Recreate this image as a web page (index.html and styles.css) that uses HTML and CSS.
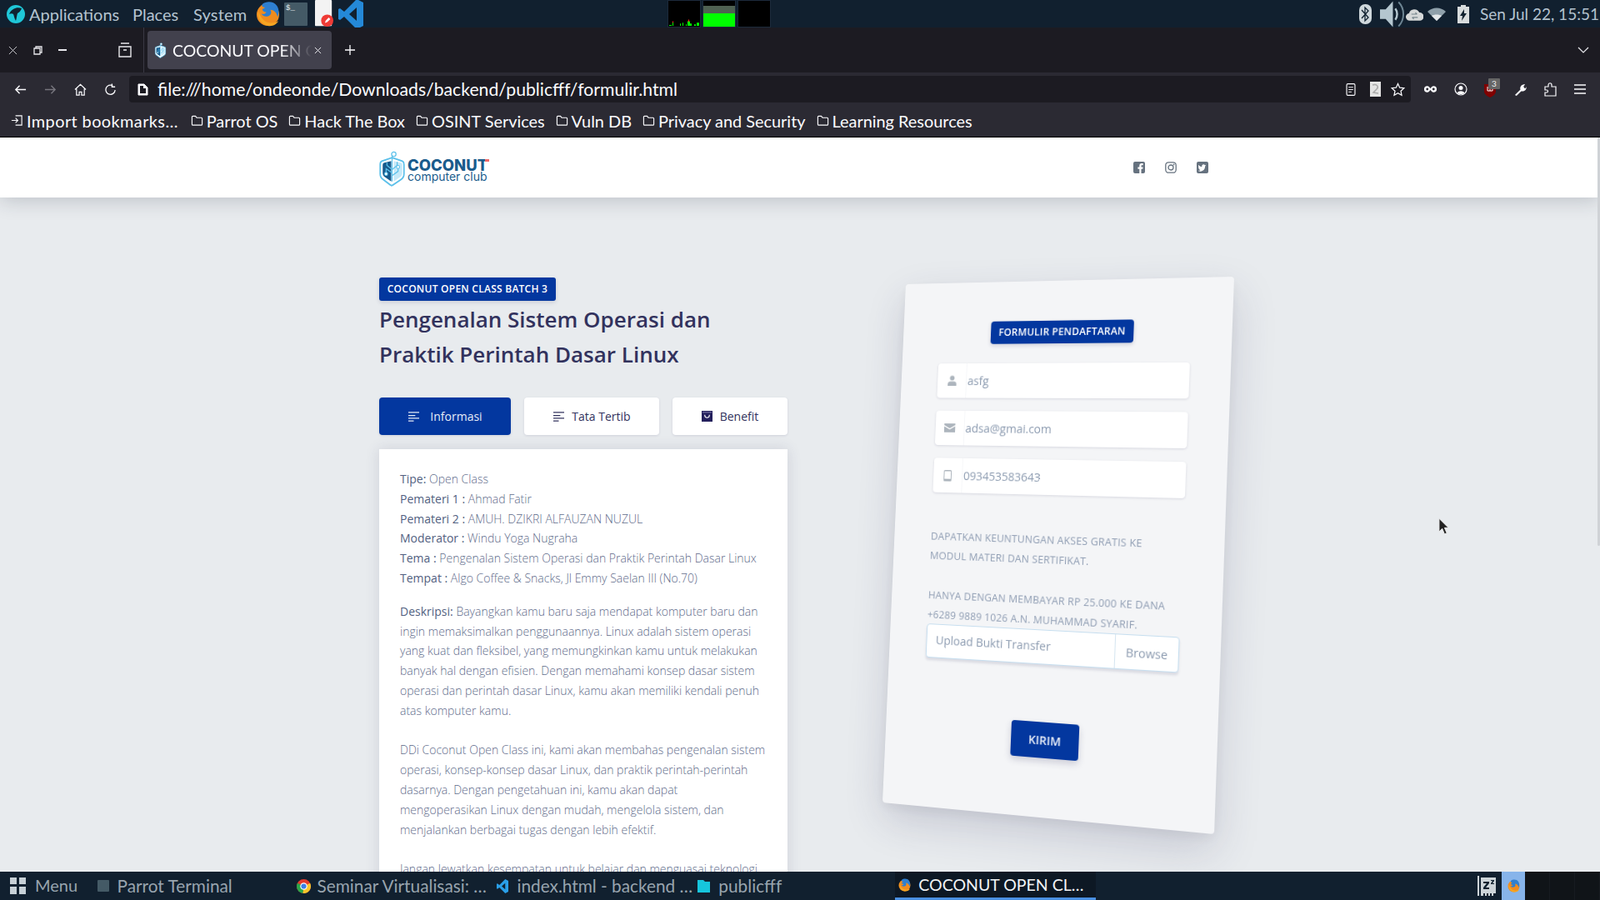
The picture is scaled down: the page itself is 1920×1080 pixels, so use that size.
FILE: index.html
```html
<!DOCTYPE html>
<html lang="id">
<head>
<meta charset="utf-8">
<title>COCONUT OPEN CLASS</title>
<link rel="stylesheet" href="styles.css">
</head>
<body>
<svg class="defs" width="0" height="0">
  <symbol id="ff" viewBox="0 0 30 34">
    <circle cx="15" cy="18" r="14" fill="#f08c1e"/>
    <path d="M8 5c5-4 14-4 18 2 3 4 3 10 1 14-1-6-5-9-9-9 2 3 1 7-3 8-4 1-7-1-8-3 3 1 5 0 6-2-3 0-5-2-5-4 2 0 3-1 3-2-3 0-4-2-3-4z" fill="#2e7fd0"/>
    <path d="M3 14c-1 8 3 16 12 18 6 1 11-2 13-6-5 3-12 3-17 0-4-3-6-7-8-12z" fill="#f6a623"/>
  </symbol>
  <symbol id="coco" viewBox="0 0 30 42">
    <path d="M15 8 27 12c2 1 2 2 2 4v11c0 3-1 5-4 7l-9 6c-1 1-2 1-3 0l-8-6c-3-2-4-4-4-7V16c0-2 0-3 2-4z" fill="#fff" stroke="#5bc0ea" stroke-width="1.8"/>
    <path d="M14 12v24l-7-5c-2-1-3-3-3-5V17c0-2 1-3 2-3z" fill="#175a8c"/>
    <path d="M17 12v24l7-5c2-1 3-3 3-5V17c0-2-1-3-2-3z" fill="#5bc0ea" opacity=".35"/>
    <path d="M15 36V6M15 22l-6-5v-3M15 26l-7-5v5M15 22l6-5v-4M15 29l7-5v-5" fill="none" stroke="#5bc0ea" stroke-width="1.2"/>
    <circle cx="17" cy="4" r="2.6" fill="#fff" stroke="#5bc0ea" stroke-width="1.2"/>
    <circle cx="8" cy="27" r="1.8" fill="#fff" stroke="#5bc0ea"/>
    <circle cx="22" cy="19" r="1.8" fill="#fff" stroke="#5bc0ea"/>
  </symbol>
  <symbol id="folder" viewBox="0 0 16 16">
    <path d="M1.5 13V3.5c0-.6.4-1 1-1h3.4l1.6 2h6c.6 0 1 .4 1 1V13c0 .6-.4 1-1 1h-11c-.6 0-1-.4-1-1z" fill="none" stroke="#fbfbfe" stroke-width="1.2"/>
  </symbol>
  <symbol id="lines" viewBox="0 0 16 14">
    <path d="M1 2h14M1 6h9M1 9.500h14M1 13h7" fill="none" stroke="currentColor" stroke-width="1.5"/>
  </symbol>
</svg>

<header class="panel">
  <svg class="i-parrot" viewBox="0 0 22 24"><circle cx="11" cy="12" r="11" fill="#1fc7d8"/><path d="M18 5c-3-1-7-1-10 1-2 1-4 3-5 6 2-1 4-1 5 0 1 2 1 5 3 8 1-3 1-6 2-9 2-1 4-3 5-6z" fill="#10212f"/></svg>
  <nav class="panel-menu"><span class="pm-a">Applications</span><span class="pm-b">Places</span><span class="pm-c">System</span></nav>
  <svg class="i-ff" viewBox="0 0 30 34"><use href="#ff"/></svg>
  <span class="i-term">$_</span>
  <svg class="i-note" viewBox="0 0 24 36"><rect width="22" height="34" y="0" rx="1" fill="#f3f3f3"/><circle cx="16" cy="27" r="8" fill="#ef3b36"/><path d="m13 30 1-3 4-4 2 2-4 4z" fill="#fff"/></svg>
  <svg class="i-vs" viewBox="0 0 30 36"><path d="M22 0 30 4v28l-8 4L7 21l-5 4-2-1V12l2-1 5 4zM22 10l-9 8 9 8z" fill="#2489d8"/></svg>
  <div class="monitors">
    <div class="mon"><svg viewBox="0 0 38 33" preserveAspectRatio="none"><path d="M1 31h3v1H1zM5 27h1v5H5zM14 29h1v3h-1zM17 28h1v4h-1zM21 30h1v2h-1zM23 26h3v6h-3zM26 29h2v3h-2zM31 30h2v2h-2zM34 28h3v4h-3z" fill="#0f0"/><path d="M24 24h1v3h-1zM5 26h1v2H5z" fill="#f22"/></svg></div>
    <div class="mon mon-mem"><span class="mem-a"></span><span class="mem-b"></span></div>
    <div class="mon"></div>
  </div>
  <div class="tray">
    <svg class="t-bt" viewBox="0 0 15 24"><rect width="15" height="24" rx="7" fill="#cfd8dc"/><path d="m3 7 8 9-4 4V4l4 4-8 9" fill="none" stroke="#10212f" stroke-width="1.3"/></svg>
    <svg class="t-vol" viewBox="0 0 30 34"><path d="M0 11h7l9-10v32l-9-10H0z" fill="#b4c6cf"/><path d="M19 10c3 4 3 10 0 14" fill="none" stroke="#b4c6cf" stroke-width="2.500"/><path d="M23 2c8 8 8 22 0 30" fill="none" stroke="#6d8593" stroke-width="2"/></svg>
    <svg class="t-cloud" viewBox="0 0 22 18"><path d="M5 17a4.500 4.500 0 0 1-1-9 7 7 0 0 1 13-1 5 5 0 0 1 1 10z" fill="#d5d8d8"/><path d="M7 9h7m-2-2 2 2M15 13H8m2 2-2-2" stroke="#76858c" stroke-width="1.2" fill="none"/></svg>
    <svg class="t-wifi" viewBox="0 0 22 16"><path d="M0 5c6-6 16-6 22 0L11 16z" fill="#8fa0aa"/><path d="M5 10c3-2 9-2 12 0l-6 6z" fill="#e4e8ea"/></svg>
    <svg class="t-bat" viewBox="0 0 14 22"><path d="M4 0h6v2h4v20H0V2h4z" fill="#d8dcdd"/><path d="M8 5 3 13h3l-1 6 6-9H8z" fill="#10212f"/></svg>
    <span class="clock">Sen Jul 22, 15:51</span>
  </div>
</header>

<section class="tabbar">
  <svg class="w-x" viewBox="0 0 12 12"><path d="m1 1 10 10M11 1 1 11" stroke="#d8d8dc" stroke-width="1"/></svg>
  <svg class="w-r" viewBox="0 0 11 11"><path d="M3 3V1h7v7H8M1 3h7v7H1z" fill="none" stroke="#e8e8ec" stroke-width="1.300"/></svg>
  <span class="w-m"></span>
  <svg class="w-a" viewBox="0 0 16 18"><path d="M3 1h10M1 5h14v12H1zM6 9h4" fill="none" stroke="#e8e8ec" stroke-width="1.400"/></svg>
  <span class="tab-sep"></span>
  <div class="tab">
    <svg class="tab-fav" viewBox="0 0 30 42"><use href="#coco"/></svg>
    <span class="tab-title">COCONUT OPEN CLASS</span>
    <svg class="tab-x" viewBox="0 0 10 10"><path d="m1 1 8 8M9 1 1 9" stroke="#e8e8ec" stroke-width="1.100"/></svg>
  </div>
  <svg class="tab-plus" viewBox="0 0 14 14"><path d="M7 1v12M1 7h12" stroke="#fbfbfe" stroke-width="1.300"/></svg>
  <svg class="tab-more" viewBox="0 0 14 9"><path d="m1 1 6 6 6-6" fill="none" stroke="#e8e8ec" stroke-width="1.200"/></svg>
</section>

<section class="toolbar">
  <div class="nav-row">
    <svg class="n-ico" viewBox="0 0 16 16"><path d="M15 8H2m5-5L2 8l5 5" fill="none" stroke="#fbfbfe" stroke-width="1.500"/></svg>
    <svg class="n-ico" viewBox="0 0 16 16"><path d="M1 8h13M9 3l5 5-5 5" fill="none" stroke="#77767e" stroke-width="1.500"/></svg>
    <svg class="n-ico" viewBox="0 0 16 16"><path d="M1 8l7-6.500L15 8M3 7v8h3.500v-4h3v4H13V7" fill="none" stroke="#fbfbfe" stroke-width="1.300"/></svg>
    <svg class="n-ico" viewBox="0 0 16 16"><path d="M14 8.500A6 6 0 1 1 11 3M10 .5V4.500h4" fill="none" stroke="#fbfbfe" stroke-width="1.400"/></svg>
    <div class="urlbar">
      <svg class="u-file" viewBox="0 0 13 15"><path d="M1 1h7l4 4v9H1z" fill="#fbfbfe" stroke="#fbfbfe"/><path d="M4 3h3v3h3v6H3V3z" fill="#1c1b22"/></svg>
      <span class="url">file:///home/ondeonde/Downloads/backend/publicfff/formulir.html</span>
      <svg class="u-read" viewBox="0 0 12 16"><rect x=".7" y=".7" width="10.600" height="14.600" rx="1.500" fill="none" stroke="#fbfbfe" stroke-width="1.200"/><path d="M3 5h6M3 8h6M3 11h4" stroke="#fbfbfe"/></svg>
      <svg class="u-doc" viewBox="0 0 14 18"><rect width="13" height="18" fill="#e4e4e4"/><path d="M3 4c5-2 8 2 5 5L4 13l6 1" fill="none" stroke="#aaa" stroke-width="1.500"/></svg>
      <svg class="u-star" viewBox="0 0 18 18"><path d="M9 1.500l2.300 5 5.400.6-4 3.700 1.100 5.400L9 13.500l-4.800 2.700 1.100-5.400-4-3.700 5.400-.6z" fill="none" stroke="#fbfbfe" stroke-width="1.300"/></svg>
    </div>
    <svg class="x-mask" viewBox="0 0 18 10"><path d="M5 1a4 4 0 1 0 0 8c2 0 3-2 4-3 1 1 2 3 4 3a4 4 0 1 0 0-8c-2 0-3 2-4 3-1-1-2-3-4-3z" fill="#fbfbfe"/><circle cx="5" cy="5" r="1.500" fill="#2b2a33"/><circle cx="13" cy="5" r="1.500" fill="#2b2a33"/></svg>
    <svg class="x-acc" viewBox="0 0 16 16"><circle cx="8" cy="8" r="7" fill="none" stroke="#fbfbfe" stroke-width="1.200"/><circle cx="8" cy="6.500" r="2.500" fill="#fbfbfe"/><path d="M3.500 12.500c2-3 7-3 9 0-2 2-7 2-9 0z" fill="#fbfbfe"/></svg>
    <div class="x-ub"><svg viewBox="0 0 14 17"><path d="M0 1h14v8c0 4-3 6-7 8-4-2-7-4-7-8z" fill="#800000"/><path d="M4 4v5h6V4M7 5v4" fill="none" stroke="#fff"/></svg><span class="ub-badge">3</span></div>
    <svg class="x-wr" viewBox="0 0 16 16"><path d="M1 15l7-7c-1-3 1-7 6-7l-2 3 1 2 2 0 1-2c0 5-4 7-7 6l-6 6z" fill="#fbfbfe"/></svg>
    <svg class="x-pz" viewBox="0 0 15 17"><path d="M1 5h4V3c0-3 4-3 4 0v2h5v11H1v-4h2c2 0 2-3 0-3H1z" fill="none" stroke="#fbfbfe" stroke-width="1.200"/></svg>
    <svg class="x-mn" viewBox="0 0 14 12"><path d="M0 1h14M0 6h14M0 11h14" stroke="#fbfbfe" stroke-width="1.300"/></svg>
  </div>
  <div class="bm-row">
    <span class="bm bm-first"><svg class="bm-ico" viewBox="0 0 16 16"><path d="M6 2h8v12H6M1 8h8M6 5l3 3-3 3" fill="none" stroke="#fbfbfe" stroke-width="1.200"/></svg>Import bookmarks…</span>
    <span class="bm"><svg class="bm-ico" viewBox="0 0 16 16"><use href="#folder"/></svg>Parrot OS</span>
    <span class="bm"><svg class="bm-ico" viewBox="0 0 16 16"><use href="#folder"/></svg>Hack The Box</span>
    <span class="bm"><svg class="bm-ico" viewBox="0 0 16 16"><use href="#folder"/></svg>OSINT Services</span>
    <span class="bm"><svg class="bm-ico" viewBox="0 0 16 16"><use href="#folder"/></svg>Vuln DB</span>
    <span class="bm"><svg class="bm-ico" viewBox="0 0 16 16"><use href="#folder"/></svg>Privacy and Security</span>
    <span class="bm"><svg class="bm-ico" viewBox="0 0 16 16"><use href="#folder"/></svg>Learning Resources</span>
  </div>
</section>

<main class="page">
  <div class="topnav">
    <a class="logo">
      <svg class="logo-mark" viewBox="0 0 30 42"><use href="#coco"/></svg>
      <span class="logo-text"><b>COCONUT</b><i>computer club</i></span>
    </a>
    <div class="social">
      <svg viewBox="0 0 14 14"><path d="M2 0h10a2 2 0 0 1 2 2v10a2 2 0 0 1-2 2H9.500V8.700h1.800l.3-2.200H9.500V5.200c0-.6.200-1 1-1h1.200v-2C11.400 2.100 10.800 2 10 2 8.400 2 7.300 3 7.300 4.800v1.700H5.400v2.200h1.900V14H2a2 2 0 0 1-2-2V2a2 2 0 0 1 2-2z"/></svg>
      <svg viewBox="0 0 14 14"><rect x=".8" y=".8" width="12.400" height="12.400" rx="3.500" fill="none" stroke="currentColor" stroke-width="1.300"/><circle cx="7" cy="7" r="3" fill="none" stroke="currentColor" stroke-width="1.300"/><circle cx="10.600" cy="3.400" r=".9"/></svg>
      <svg viewBox="0 0 14 14"><path d="M2 0h10a2 2 0 0 1 2 2v10a2 2 0 0 1-2 2H2a2 2 0 0 1-2-2V2a2 2 0 0 1 2-2zm9.500 4.500c-.4.200-.8.300-1.200.3.400-.3.800-.7.900-1.100-.4.200-.9.400-1.300.5a2 2 0 0 0-3.500 1.900c-1.700-.1-3.200-.9-4.200-2.100-.5 1-.3 2 .6 2.700-.3 0-.6-.1-.9-.2 0 1 .7 1.800 1.600 2-.3.100-.6.100-.9 0 .3.800 1 1.300 1.900 1.400-.9.700-2 1-3 .8 3.800 2.400 8.700 0 8.600-5.100.5-.3.900-.7 1.200-1.100z" fill-rule="evenodd"/></svg>
    </div>
  </div>

  <div class="content">
    <div class="col-left">
      <span class="badge">COCONUT OPEN CLASS BATCH 3</span>
      <h1 class="title">Pengenalan Sistem Operasi dan<br>Praktik Perintah Dasar Linux</h1>
      <div class="tabs">
        <button class="btn btn-info active"><svg class="btn-ico" viewBox="0 0 16 14"><use href="#lines"/></svg>Informasi</button>
        <button class="btn btn-rules"><svg class="btn-ico btn-ico-sm" viewBox="0 0 16 14"><use href="#lines"/></svg>Tata Tertib</button>
        <button class="btn btn-ben"><svg class="btn-bag" viewBox="0 0 14 14"><path d="M0 0h14v14H0z" fill="#231f5c"/><path d="M1 2h12" stroke="#8c88b8"/><path d="M4 5c0 5 6 5 6 0" fill="none" stroke="#fff" stroke-width="1.300"/></svg>Benefit</button>
      </div>
      <article class="card">
        <p class="p-meta"><strong>Tipe:</strong> Open Class<br>
        <strong>Pemateri 1 :</strong> Ahmad Fatir<br>
        <strong>Pemateri 2 :</strong> AMUH. DZIKRI ALFAUZAN NUZUL<br>
        <strong>Moderator :</strong> Windu Yoga Nugraha<br>
        <strong>Tema :</strong> Pengenalan Sistem Operasi dan Praktik Perintah Dasar Linux<br>
        <strong>Tempat :</strong> Algo Coffee &amp; Snacks, Jl Emmy Saelan III (No.70)</p>
        <p class="p-desc"><strong>Deskripsi:</strong> Bayangkan kamu baru saja mendapat komputer baru dan ingin memaksimalkan penggunaannya. Linux adalah sistem operasi yang kuat dan fleksibel, yang memungkinkan kamu untuk melakukan banyak hal dengan efisien. Dengan memahami konsep dasar sistem operasi dan perintah dasar Linux, kamu akan memiliki kendali penuh atas komputer kamu.<br><br>
        DDi Coconut Open Class ini, kami akan membahas pengenalan sistem operasi, konsep-konsep dasar Linux, dan praktik perintah-perintah dasarnya. Dengan pengetahuan ini, kamu akan dapat mengoperasikan Linux dengan mudah, mengelola sistem, dan menjalankan berbagai tugas dengan lebih efektif.<br><br>
        Jangan lewatkan kesempatan untuk belajar dan menguasai teknologi</p>
      </article>
    </div>

    <form class="form-card">
      <span class="form-badge">FORMULIR PENDAFTARAN</span>
      <div class="field"><span class="f-ico"><svg viewBox="0 0 12 14"><circle cx="6" cy="3.500" r="3.200"/><path d="M0 14v-2.500C0 9 2 8 3.500 8h5C10 8 12 9 12 11.500V14z"/></svg></span><span class="f-val">asfg</span></div>
      <div class="field"><span class="f-ico"><svg class="ico-mail" viewBox="0 0 14 11"><path d="M0 0h14v2L7 6 0 2z"/><path d="M0 3.500 7 7.500l7-4V11H0z"/></svg></span><span class="f-val">adsa@gmai.com</span></div>
      <div class="field"><span class="f-ico"><svg class="ico-phone" viewBox="0 0 10 14"><path d="M1.500 0h7A1.500 1.500 0 0 1 10 1.500v11A1.500 1.500 0 0 1 8.500 14h-7A1.500 1.500 0 0 1 0 12.500v-11A1.500 1.500 0 0 1 1.500 0zM1 1.500V11h8V1.500z" fill-rule="evenodd"/></svg></span><span class="f-val">093453583643</span></div>
      <p class="f-note f-note-a">DAPATKAN KEUNTUNGAN AKSES GRATIS KE<br>MODUL MATERI DAN SERTIFIKAT.</p>
      <p class="f-note f-note-b">HANYA DENGAN MEMBAYAR RP 25.000 KE DANA<br>+6289 9889 1026 A.N. MUHAMMAD SYARIF.</p>
      <div class="file"><span class="file-label">Upload Bukti Transfer</span><span class="file-btn">Browse</span></div>
      <button class="kirim" type="button">KIRIM</button>
    </form>
  </div>

  <span class="scrollthumb"></span>
  <svg class="cursor" viewBox="0 0 14 22"><path d="M1 1v17l4-4 3 7 3-1-3-7h5z" fill="#222" stroke="#eee" stroke-width="1"/></svg>
</main>

<footer class="taskbar">
  <svg class="tk-menu" viewBox="0 0 20 20"><path d="M0 0h8v8H0zM11 0h8v8h-8zM0 11h8v9H0zM11 11h8v9h-8z" fill="#c7d0d6"/></svg>
  <span class="tk tk-m">Menu</span>
  <span class="tk-term"></span>
  <span class="tk tk-p">Parrot Terminal</span>
  <svg class="tk-chrome" viewBox="0 0 18 18"><circle cx="9" cy="9" r="9" fill="#e33b2e"/><path d="M9 9 1 5a9 9 0 0 0 7 13z" fill="#2aa84a"/><path d="M9 9l8-4a9 9 0 0 1-9 13z" fill="#f8c42c"/><circle cx="9" cy="9" r="4.500" fill="#fff"/><circle cx="9" cy="9" r="3.300" fill="#3a7ee8"/></svg>
  <span class="tk tk-s">Seminar Virtualisasi: …</span>
  <svg class="tk-vs" viewBox="0 0 30 36"><path d="M22 0 30 4v28l-8 4L7 21l-5 4-2-1V12l2-1 5 4zM22 10l-9 8 9 8z" fill="#2a9fe8"/></svg>
  <span class="tk tk-i">index.html - backend …</span>
  <svg class="tk-fold" viewBox="0 0 15 16"><path d="M0 1h7l2 2h6v13H0z" fill="#16c5dc"/></svg>
  <span class="tk tk-f">publicfff</span>
  <div class="tk-active">
    <svg class="tk-ff" viewBox="0 0 30 34"><use href="#ff"/></svg>
    <span class="tk-at">COCONUT OPEN CL…</span>
  </div>
  <svg class="tk-z" viewBox="0 0 22 26"><path d="M0 1h2v24H0zM4 3h18v19H19v3h-2v-3h-2v3h-2v-3h-2v3H9v-3H7v3H4z" fill="#cdd4d8"/><path d="M7 8h7v2l-4 5h4v2H7v-2l4-5H7zM16 6h4v1l-2 3h2v1h-4v-1l2-3h-2z" fill="#10212f"/></svg>
  <div class="tk-hl"><svg viewBox="0 0 30 34"><use href="#ff"/></svg></div>
  <div class="tk-dark"><span></span><span></span><span></span></div>
</footer>
</body>
</html>
```

FILE: styles.css
```css
* { box-sizing: border-box; }
html, body { margin: 0; padding: 0; height: 100%; }
body { width: 1920px; height: 1080px; display: flex; flex-direction: column; overflow: hidden; font-family: "Lato", "Noto Sans", sans-serif; background: #e8ebee; }
.defs { position: absolute; }
svg { display: block; flex: none; }

/* top desktop panel */
.panel { height: 33px; flex: none; display: flex; align-items: center; background: #11202f; color: #b4c3cf; font-size: 20px; padding-left: 8px; }
.i-parrot { width: 22px; height: 24px; }
.panel-menu { display: flex; margin-left: 5px; }
.pm-a { width: 124px; } .pm-b { width: 73px; } .pm-c { width: 75px; letter-spacing: .2px; }
.i-ff { width: 29px; height: 33px; }
.i-term { width: 28px; height: 28px; margin-left: 5px; background: #445a66; color: #e8eef0; font-family: "Liberation Mono", monospace; font-size: 9px; line-height: 14px; padding-left: 2px; border-radius: 1px; }
.i-note { width: 24px; height: 33px; margin-left: 8px; }
.i-vs { width: 30px; height: 36px; margin-left: 5px; }
.monitors { display: flex; gap: 2px; margin-left: 365px; align-self: flex-start; }
.mon { width: 40px; height: 33px; background: #000; border: 1px solid #1c2a3b; display: flex; flex-direction: column; }
.mon svg { width: 100%; height: 100%; }
.mem-a { height: 6px; } .mem-b { height: 9px; background: #4f6152; flex: none; }
.mon-mem { background: #000; }
.mon-mem::after { content: ""; flex: 1; background: #0f0; }
.tray { margin-left: auto; display: flex; align-items: center; padding-right: 4px; }
.t-bt { width: 15px; height: 24px; }
.t-vol { width: 29px; height: 34px; margin-left: 10px; }
.t-cloud { width: 21px; height: 18px; margin-left: 2px; }
.t-wifi { width: 22px; height: 16px; margin-left: 5px; }
.t-bat { width: 14px; height: 22px; margin-left: 14px; }
.clock { margin-left: 13px; width: 140px; white-space: nowrap; font-size: 19px; }

/* browser tabs */
.tabbar { height: 54px; flex: none; background: #1c1b22; display: flex; align-items: center; padding-left: 10px; }
.w-x { width: 11px; height: 11px; }
.w-r { width: 11px; height: 11px; margin-left: 19px; }
.w-m { width: 10px; height: 1.500px; background: #e8e8ec; margin-left: 19px; }
.w-a { width: 16px; height: 18px; margin-left: 62px; }
.tab-sep { width: 1px; height: 54px; background: #3a3944; margin-left: 14px; }
.tab { width: 221px; height: 46px; margin-left: 4px; background: #42414d; border-radius: 4px; display: flex; align-items: center; padding-left: 8px; color: #fbfbfe; font-size: 19.400px; }
.tab-fav { width: 15px; height: 19px; }
.tab-title { width: 167px; margin-left: 7px; white-space: nowrap; overflow: hidden; -webkit-mask-image: linear-gradient(90deg, #000 78%, transparent 100%); mask-image: linear-gradient(90deg, #000 78%, transparent 100%); }
.tab-x { width: 9px; height: 9px; margin-left: 3px; }
.tab-plus { width: 14px; height: 14px; margin-left: 15px; }
.tab-more { width: 14px; height: 9px; margin-left: auto; margin-right: 13px; }

/* toolbar */
.toolbar { height: 78px; flex: none; background: #2b2a33; border-bottom: 1px solid #000; color: #fbfbfe; }
.nav-row { height: 36px; display: flex; align-items: center; padding: 4px 0 0 17px; }
.n-ico { width: 15px; height: 15px; margin-right: 21px; }
.urlbar { width: 1538px; height: 32px; margin-left: -6px; background: #1c1b22; border-radius: 4px; display: flex; align-items: center; padding-left: 10px; }
.u-file { width: 13px; height: 15px; }
.url { margin-left: 11px; font-size: 21.200px; width: 1430px; white-space: nowrap; }
.u-read { width: 12px; height: 15px; margin-left: -4px; }
.u-doc { width: 14px; height: 18px; margin-left: 17px; }
.u-star { width: 17px; height: 17px; margin-left: 11px; }
.x-mask { width: 17px; height: 10px; margin-left: 15px; }
.x-acc { width: 16px; height: 16px; margin-left: 20px; }
.x-ub { width: 16px; height: 18px; margin-left: 20px; position: relative; }
.x-ub svg { width: 14px; height: 17px; margin-top: 2px; }
.ub-badge { position: absolute; left: 5px; top: -4px; width: 14px; height: 13px; background: #666; color: #eee; font-size: 10px; line-height: 13px; text-align: center; border-radius: 1px; }
.x-wr { width: 15px; height: 15px; margin-left: 20px; }
.x-pz { width: 15px; height: 17px; margin-left: 21px; }
.x-mn { width: 14px; height: 12px; margin-left: 21px; }
.bm-row { height: 41px; display: flex; align-items: center; padding: 2px 0 0 13px; font-size: 19.900px; gap: 13px; }
.bm { display: flex; align-items: center; gap: 4px; white-space: nowrap; }
.bm-first { letter-spacing: .42px; margin-right: 2px; }
.bm-ico { width: 15px; height: 15px; }

/* page */
.page { flex: 1; min-height: 0; position: relative; overflow: hidden; background: #e8ebee; font-family: "Open Sans", sans-serif; color: #525f7f; }
.topnav { height: 72px; background: #fff; box-shadow: 0 3px 24px rgba(30, 40, 60, .22); display: flex; align-items: center; padding-left: 455px; position: relative; }
.logo { display: flex; align-items: center; gap: 3px; width: 905px; }
.logo-mark { width: 31px; height: 43px; margin-top: 2px; }
.logo-text { display: flex; flex-direction: column; color: #1a5c8c; position: relative; margin-top: 6px; }
.logo-text::after { content: ""; position: absolute; right: -2px; top: 1px; width: 5px; height: 3px; background: #ef6a6a; }
.logo-text b { font-family: "Inter", sans-serif; font-weight: 800; font-size: 18.500px; line-height: 16px; }
.logo-text i { font-family: "Inter", sans-serif; font-style: normal; font-size: 14px; line-height: 12px; }
.social { display: flex; gap: 24px; color: #66727f; }
.social svg { width: 14px; height: 14px; fill: currentColor; }

.content { display: flex; align-items: flex-start; padding: 96px 0 0 455px; }
.col-left { width: 490px; flex: none; }
.badge { display: block; width: 212px; height: 28px; background: #03379f; color: #fff; border-radius: 3px; font-size: 12px; font-weight: 600; line-height: 28px; text-align: center; letter-spacing: .25px; box-shadow: 0 2px 5px rgba(50, 50, 93, .15); }
.title { margin: 1px 0 0; font-size: 26px; line-height: 42px; font-weight: 600; color: #32325d; }
.tabs { display: flex; margin-top: 31px; gap: 16px; }
.btn { height: 45px; border: 0; border-radius: 4px; background: #fff; color: #32325d; font: 400 14px "Open Sans", sans-serif; display: flex; align-items: center; justify-content: center; box-shadow: 0 1px 3px rgba(50, 50, 93, .13); padding: 0; }
.btn-info { width: 158px; }
.btn-rules { width: 162px; }
.btn-ben { width: 138px; }
.active { background: #03379f; color: #e6ecf7; }
.btn-ico { width: 15px; height: 13px; margin-right: 12px; }
.btn-ico-sm { margin-right: 8px; }
.btn-bag { width: 13px; height: 13px; margin-right: 9px; }
.card { margin-top: 17px; height: 600px; background: #fff; padding: 24px 25px; box-shadow: 0 0 16px rgba(50, 50, 93, .14); font-size: 14px; line-height: 23.800px; font-weight: 300; color: #5f6c8b; }
.card p { margin: 0; }
.card strong { font-weight: 500; color: #525f7f; }
.p-desc { margin-top: 16px !important; }

/* tilted form */
.form-card { width: 400px; height: 650px; flex: none; margin: 8px 0 0 142px; padding: 49px 47px 0; background: #f4f5f7; border-radius: 4px; transform-origin: 0 0; transform: matrix3d(0.916595, -0.020938, 0, -0.000173615, -0.042463, 0.943298, 0, -0.000021905, 0, 0, 1, 0, 0, 0, 0, 1); box-shadow: 0 20px 50px rgba(50, 50, 93, .18), 0 5px 15px rgba(0, 0, 0, .06); color: #8898aa; }
.form-badge { display: block; width: 174px; height: 28px; margin: 0 auto 24px 65px; background: #03379f; border-radius: 4px; color: #fff; font-size: 12px; font-weight: 600; line-height: 28px; text-align: center; letter-spacing: .2px; box-shadow: 0 2px 5px rgba(50, 50, 93, .2); }
.field { height: 43px; background: #fff; border-radius: 4px; display: flex; align-items: center; margin-bottom: 16px; box-shadow: 0 1px 3px rgba(50, 50, 93, .15); font-size: 14px; }
.f-ico { width: 37px; height: 100%; display: flex; align-items: center; justify-content: center; border-right: 1px solid #f6f7f9; flex: none; }
.f-ico svg { width: 11px; height: 13px; fill: #adb5bd; }
.f-ico .ico-mail { width: 14px; height: 11px; }
.f-ico .ico-phone { width: 10px; height: 14px; }
.f-val { padding-left: 1px; color: #8c9bb0; }
.f-note { margin: 0; font-size: 12.300px; line-height: 24px; text-transform: uppercase; color: #8f9db3; letter-spacing: .22px; white-space: nowrap; }
.f-note-a { margin-top: 43px; }
.f-note-b { margin-top: 25px; }
.file { height: 42px; margin-top: -1px; background: #fff; border: 1px solid #c6deef; border-radius: 4px; display: flex; box-shadow: 0 3px 3px rgba(50, 50, 93, .13); font-size: 14px; }
.file-label { flex: 1; padding: 9px 11px 0; color: #8c9bb0; }
.file-btn { width: 74px; border-left: 1px solid #d5e5f0; display: flex; align-items: center; justify-content: center; color: #8c9bb0; }
.kirim { display: block; width: 82px; height: 43px; margin: 69px 0 0 111px; border: 0; border-radius: 4px; background: #03379f; color: #eef2fa; font: 600 14px "Open Sans", sans-serif; box-shadow: 0 4px 8px rgba(50, 50, 93, .2); }

.scrollthumb { position: absolute; right: 0; top: 0; width: 3px; height: 490px; background: #cfd2d6; border-radius: 2px; }
.cursor { position: absolute; left: 1726px; top: 456px; width: 13px; height: 21px; }

/* bottom taskbar */
.taskbar { height: 34px; flex: none; background: #11202f; display: flex; align-items: center; color: #98a4ae; font-size: 20.800px; padding-left: 12px; white-space: nowrap; }
.tk-menu { width: 20px; height: 20px; }
.tk { display: block; overflow: hidden; margin-top: -2px; }
.tk-m { margin-left: 10px; width: 75px; font-size: 20px; }
.tk-term { width: 14px; height: 14px; background: #445a66; margin-left: 0; border-radius: 1px; }
.tk-p { margin-left: 10px; width: 216px; }
.tk-chrome { width: 17px; height: 17px; }
.tk-s { margin-left: 8px; width: 217px; }
.tk-vs { width: 14px; height: 17px; }
.tk-i { margin-left: 10px; width: 218px; }
.tk-fold { width: 15px; height: 16px; }
.tk-f { margin-left: 10px; width: 213px; }
.tk-active { width: 242px; height: 34px; background: #0d1824; border-bottom: 3px solid #4a90e2; display: flex; align-items: center; padding-left: 4px; color: #f2f4f6; }
.tk-ff { width: 15px; height: 18px; }
.tk-at { margin-left: 9px; font-size: 19.500px; }
.tk-z { width: 22px; height: 26px; margin-left: 458px; }
.tk-hl { width: 28px; height: 34px; margin-left: 7px; background: #87b4ea; display: flex; align-items: center; justify-content: center; }
.tk-hl svg { width: 15px; height: 18px; }
.tk-dark { flex: 1; height: 34px; display: flex; background: #101418; }
.tk-dark span { width: 30px; border-right: 1px solid #171b20; }
```
